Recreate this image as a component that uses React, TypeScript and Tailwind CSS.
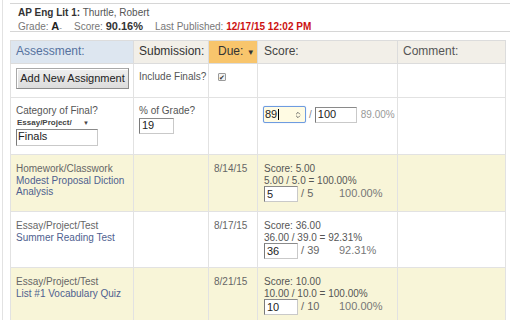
import { ChevronsUpDown } from "lucide-react";

const FONT = { fontFamily: '"Liberation Sans", Arial, sans-serif' };

type Row = {
  cat: string;
  title: string[];
  due: string;
  score: string;
  calc: string;
  val: string;
  max: string;
  pct: string;
  hi: boolean;
  h: string;
};

const ROWS: Row[] = [
  { cat: "Homework/Classwork", title: ["Modest Proposal Diction", "Analysis"], due: "8/14/15", score: "5.00", calc: "5.00 / 5.0 = 100.00%", val: "5", max: "5", pct: "100.00%", hi: true, h: "h-[57px]" },
  { cat: "Essay/Project/Test", title: ["Summer Reading Test"], due: "8/17/15", score: "36.00", calc: "36.00 / 39.0 = 92.31%", val: "36", max: "39", pct: "92.31%", hi: false, h: "h-[56px]" },
  { cat: "Essay/Project/Test", title: ["List #1 Vocabulary Quiz"], due: "8/21/15", score: "10.00", calc: "10.00 / 10.0 = 100.00%", val: "10", max: "10", pct: "100.00%", hi: true, h: "h-[56px]" },
];

function TextBox({ value, w }: { value: string; w: string }) {
  return (
    <div className={`flex h-[16px] ${w} items-center border border-[#c9c9c9] border-l-[#7a7a7a] border-t-[#8a8a8a] bg-white pl-[2px] text-[11px] leading-none text-[#222]`}>
      {value}
    </div>
  );
}

export default function App() {
  return (
    <div className="relative h-[320px] w-[512px] overflow-hidden bg-white" style={FONT}>
      {/* left page edge */}
      <div className="absolute left-[2px] top-0 h-full w-px bg-[#e2e2e2]" />

      <div className="pl-[10px] pr-[2px] pt-[3px]">
        {/* student header */}
        <div className="h-[29px] border-y border-[#d6d6d6] pl-[8px] pt-[3px] text-[10px] leading-[12.5px] text-[#555]">
          <p>
            <span className="font-bold text-[#333]">AP Eng Lit 1:</span> Thurtle, Robert
          </p>
          <p className="text-[#777]">
            Grade: <span className="text-[11px] font-bold text-[#222]">A</span>
            <span className="text-[8px]">-</span>
            <span className="ml-[12px]">Score: </span>
            <span className="text-[11px] font-bold text-[#333]">90.16%</span>
            <span className="ml-[12px]">Last Published: </span>
            <span className="font-bold text-[#cc1111]">12/17/15 12:02 PM</span>
          </p>
        </div>

        <table className="mt-[8px] table-fixed border-collapse text-[10px] leading-[11.5px] text-[#555]">
          <colgroup>
            <col className="w-[123px]" />
            <col className="w-[75px]" />
            <col className="w-[49px]" />
            <col className="w-[140px]" />
            <col className="w-[108px]" />
          </colgroup>
          <thead>
            <tr className="h-[23px] text-left text-[12px] font-normal">
              <th className="border border-[#dcdcdc] bg-[#dde6f0] pl-[5px] font-normal text-[#55719e]">Assessment:</th>
              <th className="border border-[#dcdcdc] bg-[#f2efe8] pl-[5px] font-normal text-[#333]">Submission:</th>
              <th className="border border-[#dcdcdc] bg-[#f8c56c] pl-[9px] font-normal text-[#333]">
                Due: <span className="text-[8px]">▼</span>
              </th>
              <th className="border border-[#dcdcdc] bg-[#f2efe8] pl-[6px] font-normal text-[#444]">Score:</th>
              <th className="border border-[#dcdcdc] bg-[#f2efe8] pl-[5px] font-normal text-[#555]">Comment:</th>
            </tr>
          </thead>
          <tbody>
            <tr className="h-[34px] align-top">
              <td className="border border-[#e2e2e2] pl-[5px] pt-[4px]">
                <button className="h-[21px] w-[113px] border border-[#a9a9a9] border-b-[#8c8c8c] border-r-[#8c8c8c] bg-gradient-to-b from-[#efefef] to-[#dcdcdc] text-[11px] text-[#222] shadow-[inset_1px_1px_0_#fff]">
                  Add New Assignment
                </button>
              </td>
              <td className="border border-[#e2e2e2] pl-[5px] pt-[7px]">Include Finals?</td>
              <td className="border border-[#e2e2e2] pl-[5px] pt-[9px]">
                <div className="ml-[4px] flex h-[8px] w-[8px] items-center justify-center rounded-[1px] border border-[#9a9a9a] bg-[#f2f2f2] text-[7px] leading-none text-[#333]">
                  ✔
                </div>
              </td>
              <td className="border border-[#e2e2e2]" />
              <td className="border border-[#e2e2e2]" />
            </tr>

            <tr className="h-[57px] align-top">
              <td className="border border-[#e2e2e2] pl-[5px] pt-[7px]">
                <p>Category of Final?</p>
                <div className="mt-[2px] flex h-[9px] w-[78px] items-center justify-between bg-white pl-[1px] pr-[5px] text-[8px] font-bold leading-none text-[#444]">
                  <span>Essay/Project/</span>
                  <span className="text-[6px]">▼</span>
                </div>
                <div className="mt-[1px] flex h-[17px] w-[82px] items-center border border-[#c9c9c9] border-l-[#7a7a7a] border-t-[#8a8a8a] pl-[1px] text-[11px] text-[#222]">
                  Finals
                </div>
              </td>
              <td className="border border-[#e2e2e2] pl-[5px] pt-[7px]">
                <p>% of Grade?</p>
                <div className="mt-[1px]">
                  <TextBox value="19" w="w-[35px]" />
                </div>
              </td>
              <td className="border border-[#e2e2e2]" />
              <td className="border border-[#e2e2e2] pl-[5px] pt-[8px]">
                <div className="flex items-center text-[10px]">
                  <div className="flex h-[17px] w-[43px] items-center justify-between rounded-[2px] border border-[#6e9be0] bg-[#fffbe3] pl-[1px] pr-[3px] text-[11px] leading-none text-[#222] shadow-[0_0_1px_#9cc0f0]">
                    <span>
                      89<span className="ml-px inline-block h-[11px] w-px bg-black align-middle" />
                    </span>
                    <ChevronsUpDown size={8} strokeWidth={2.5} className="text-[#555]" />
                  </div>
                  <span className="mx-[3px] text-[#888]">/</span>
                  <TextBox value="100" w="w-[42px]" />
                  <span className="ml-[4px] text-[#999]">89.00%</span>
                </div>
              </td>
              <td className="border border-[#e2e2e2]" />
            </tr>

            {ROWS.map((r) => (
              <tr key={r.due} className={`${r.h} align-top ${r.hi ? "bg-[#f8f5d8]" : "bg-white"}`}>
                <td className="border border-[#e2e2e2] pl-[5px] pt-[8px]">
                  <p className="text-[#666]">{r.cat}</p>
                  {r.title.map((t) => (
                    <p key={t} className="text-[#4f5f8f]">
                      {t}
                    </p>
                  ))}
                </td>
                <td className="border border-[#e2e2e2]" />
                <td className="border border-[#e2e2e2] pl-[5px] pt-[8px] text-[#666]">{r.due}</td>
                <td className="border border-[#e2e2e2] pl-[6px] pt-[8px]">
                  <p>Score: {r.score}</p>
                  <p>{r.calc}</p>
                  <div className="flex items-center">
                    <TextBox value={r.val} w="w-[34px]" />
                    <span className="ml-[3px] w-[38px] text-[11px] text-[#666]">/ {r.max}</span>
                    <span className="text-[11px] text-[#777]">{r.pct}</span>
                  </div>
                </td>
                <td className="border border-[#e2e2e2]" />
              </tr>
            ))}
          </tbody>
        </table>
      </div>
    </div>
  );
}
